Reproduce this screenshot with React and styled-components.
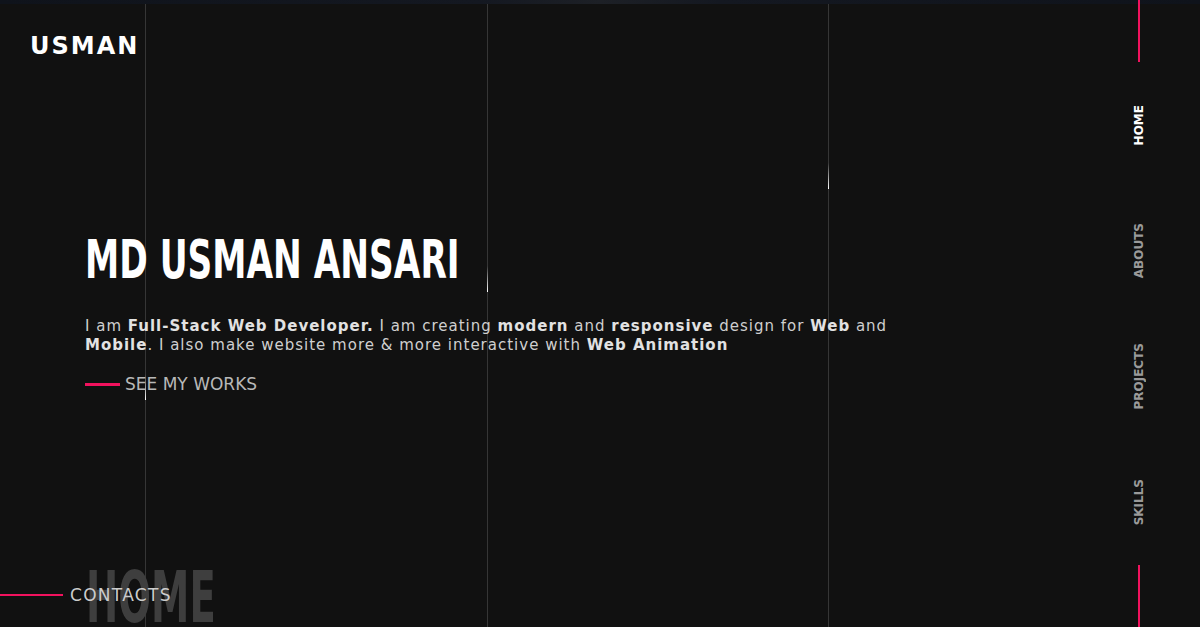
import React from 'react';
import styled, { createGlobalStyle } from 'styled-components';

const GlobalStyle = createGlobalStyle`
  html, body {
    margin: 0;
    padding: 0;
    background: #111111;
  }
  * {
    box-sizing: border-box;
  }
`;

const pink = '#f2125e';
const bodyFont = `"DejaVu Sans", "Noto Sans", sans-serif`;
const headFont = `"DejaVu Sans Condensed", "DejaVu Sans", sans-serif`;

const navItems = [
  { label: 'HOME', active: true },
  { label: 'ABOUTS' },
  { label: 'PROJECTS' },
  { label: 'SKILLS' },
];

const App = () => {
  return (
    <>
      <GlobalStyle />
      <StyledPage>
        <div className="top-band" />
        <div className="grid-lines">
          <span />
          <span className="line" />
          <span className="line" />
          <span className="line" />
          <i className="drop drop-1" />
          <i className="drop drop-2" />
          <i className="drop drop-3" />
        </div>
        <div className="frame">
          <main className="main">
            <header className="header">
              <a className="logo">USMAN</a>
            </header>
            <section className="hero">
              <h1 className="title">MD USMAN ANSARI</h1>
              <p className="intro">
                I am <b>Full-Stack Web Developer.</b> I am creating <b>modern</b> and{' '}
                <b>responsive</b> design for <b>Web</b> and <b>Mobile</b>. I also make
                website more &amp; more interactive with <b>Web Animation</b>
              </p>
              <LinkButton>
                <Dash $width={35} $thick={3} />
                <span>SEE MY WORKS</span>
              </LinkButton>
            </section>
            <footer className="footer">
              <LinkButton $small>
                <Dash $width={63} $thick={2} />
                <span>CONTACTS</span>
              </LinkButton>
            </footer>
            <div className="watermark">HOME</div>
          </main>
          <nav className="nav">
            <PinkBar />
            <ul className="nav-list">
              {navItems.map((item) => (
                <NavItem key={item.label} $active={item.active}>
                  <span>{item.label}</span>
                </NavItem>
              ))}
            </ul>
            <PinkBar />
          </nav>
        </div>
      </StyledPage>
    </>
  );
};

const Dash = styled.span`
  display: block;
  width: ${(p) => p.$width}px;
  height: ${(p) => p.$thick}px;
  background: ${pink};
`;

const LinkButton = styled.a`
  display: flex;
  align-items: center;
  gap: ${(p) => (p.$small ? '7px' : '5px')};
  font-family: ${bodyFont};
  font-size: 17px;
  letter-spacing: ${(p) => (p.$small ? '1.3px' : '0')};
  color: ${(p) => (p.$small ? '#cccccc' : '#b8b8b8')};
  cursor: pointer;
`;

const PinkBar = styled.span`
  display: block;
  width: 2px;
  height: 62px;
  background: ${pink};
  flex: none;
`;

const NavItem = styled.li`
  flex: 1;
  display: flex;
  align-items: center;
  justify-content: center;
  span {
    writing-mode: vertical-rl;
    transform: rotate(180deg);
    font-family: ${bodyFont};
    font-weight: bold;
    font-size: 12px;
    color: ${(p) => (p.$active ? '#ffffff' : '#9a9a9a')};
  }
`;

const StyledPage = styled.div`
  position: relative;
  width: 100%;
  height: 627px;
  overflow: hidden;
  background: #111111;

  .top-band {
    height: 4px;
    background: linear-gradient(
      90deg,
      #0f131b 0%,
      #141821 40%,
      #1d2026 50%,
      #141821 60%,
      #0f131b 100%
    );
  }

  .grid-lines {
    position: absolute;
    top: 4px;
    left: 0;
    right: 0;
    bottom: 0;
    display: grid;
    grid-template-columns: 145px 342px 341px 1fr;
    pointer-events: none;
    .line {
      border-left: 1px solid #363636;
    }
    .drop {
      position: absolute;
      width: 1px;
      height: 26px;
      background: linear-gradient(180deg, rgba(255, 255, 255, 0), #ffffff);
    }
    .drop-1 {
      left: 828px;
      top: 159px;
    }
    .drop-2 {
      left: 487px;
      top: 262px;
    }
    .drop-3 {
      left: 145px;
      top: 370px;
    }
  }

  .frame {
    position: relative;
    height: 623px;
    display: flex;
  }

  .main {
    position: relative;
    flex: 1;
    display: flex;
    flex-direction: column;
  }

  .header {
    padding: 28px 0 0 30px;
    .logo {
      font-family: ${bodyFont};
      font-weight: bold;
      font-size: 24px;
      letter-spacing: 2px;
      color: #ffffff;
    }
  }

  .hero {
    padding: 173px 0 0 85px;
    flex: 1;
    .title {
      margin: 0;
      font-family: ${headFont};
      font-weight: bold;
      font-size: 54px;
      line-height: 1;
      color: #ffffff;
      transform: scaleX(0.707);
      transform-origin: left center;
      white-space: nowrap;
    }
    .intro {
      margin: 30px 0 0;
      width: 830px;
      font-family: ${bodyFont};
      font-size: 15px;
      line-height: 19px;
      letter-spacing: 1px;
      color: #cfcfcf;
      b {
        color: #e2e2e2;
      }
    }
    ${LinkButton} {
      margin-top: 19px;
    }
  }

  .footer {
    padding: 0 0 22px 0;
    position: relative;
    z-index: 1;
  }

  .watermark {
    position: absolute;
    left: 86px;
    bottom: -6px;
    font-family: ${headFont};
    font-weight: bold;
    font-size: 72px;
    line-height: 1;
    color: #3e3e3e;
    transform: scaleX(0.595);
    transform-origin: left bottom;
  }

  .nav {
    width: 28px;
    margin-right: 47px;
    display: flex;
    flex-direction: column;
    align-items: center;
    margin-top: -4px;
    height: 627px;
    .nav-list {
      flex: 1;
      list-style: none;
      margin: 0;
      padding: 0;
      display: flex;
      flex-direction: column;
      height: 100%;
    }
  }
`;

export default App;
